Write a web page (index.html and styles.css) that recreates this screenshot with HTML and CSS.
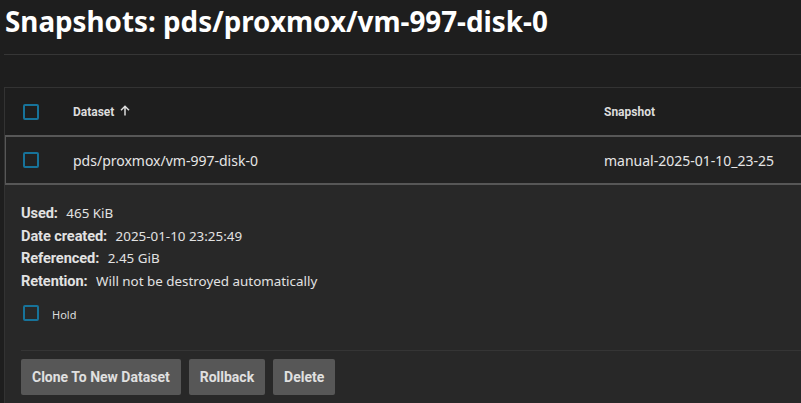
FILE: index.html
```html
<!DOCTYPE html>
<html>
<head>
<meta charset="utf-8">
<link rel="stylesheet" href="styles.css">
</head>
<body>
<div class="page">
  <h1 class="title">Snapshots: pds/proxmox/vm-997-disk-0</h1>
  <div class="card">
    <div class="thead">
      <div class="cell-check"><span class="checkbox"></span></div>
      <div class="cell-dataset th">Dataset <svg class="arrow" width="10" height="11" viewBox="0 0 10 11"><path d="M5 10.5V1.5M1 5.3L5 1.3L9 5.3" fill="none" stroke="#dcdcdc" stroke-width="1.5"/></svg></div>
      <div class="cell-snap th">Snapshot</div>
    </div>
    <div class="trow">
      <div class="cell-check"><span class="checkbox"></span></div>
      <div class="cell-dataset">pds/proxmox/vm-997-disk-0</div>
      <div class="cell-snap">manual-2025-01-10_23-25</div>
    </div>
    <div class="detail">
      <div class="info"><b>Used:</b> 465 KiB</div>
      <div class="info"><b>Date created:</b> 2025-01-10 23:25:49</div>
      <div class="info"><b>Referenced:</b> 2.45 GiB</div>
      <div class="info"><b>Retention:</b> Will not be destroyed automatically</div>
      <label class="hold"><span class="checkbox"></span><span class="hold-label">Hold</span></label>
      <div class="actions">
        <button class="btn">Clone To New Dataset</button>
        <button class="btn">Rollback</button>
        <button class="btn">Delete</button>
      </div>
    </div>
  </div>
</div>
</body>
</html>
```
FILE: styles.css
```css
html, body {
  margin: 0;
  background: #1e1e1e;
  height: 100%;
  overflow: hidden;
}
body {
  font-family: "Noto Sans", "Open Sans", sans-serif;
  color: #e2e2e2;
}
.page {
  padding-left: 4px;
}
.title {
  margin: 0;
  padding: 0 0 0 1px;
  height: 54px;
  line-height: 42px;
  font-size: 27.8px;
  font-weight: 700;
  color: #ffffff;
  border-bottom: 1px solid #363636;
}
.card {
  margin-top: 32px;
  border: 1px solid #333;
  border-right: none;
  background: #1e1e1e;
}
.thead, .trow {
  display: flex;
  align-items: center;
}
.thead {
  height: 47px;
}
.trow {
  height: 46px;
  background: #222;
  border: 1px solid #575757;
  border-top-width: 2px;
  border-bottom-width: 2px;
  border-right: none;
  font-size: 14px;
  color: #e6e6e6;
}
.cell-check {
  width: 68px;
  padding-left: 18px;
  box-sizing: border-box;
  display: flex;
}
.trow .cell-check { width: 67px; padding-left: 17px; }
.cell-dataset {
  width: 531px;
}
.th {
  font-family: Roboto, "Noto Sans", sans-serif;
  font-size: 12px;
  font-weight: 700;
  color: #dcdcdc;
  display: flex;
  align-items: center;
}
.arrow {
  margin-left: 6px;
  margin-top: -2px;
}
.checkbox {
  display: inline-block;
  width: 12px;
  height: 12px;
  border: 2px solid #17739a;
  border-radius: 2px;
}
.detail {
  background: #282828;
  padding: 17px 0 20px 16px;
  font-size: 13.4px;
  color: #e2e2e2;
}
.info {
  line-height: 22.6px;
}
.info b {
  font-family: Roboto, "Noto Sans", sans-serif;
  font-size: 14.6px;
  font-weight: 700;
  margin-right: 5px;
  letter-spacing: -0.1px;
}
.hold {
  display: flex;
  align-items: center;
  margin-top: 11px;
  padding-left: 2px;
  height: 20px;
}
.hold-label {
  font-size: 11px;
  margin-left: 13px;
  margin-top: 2px;
  color: #dcdcdc;
}
.actions {
  margin-top: 27px;
  border-top: 1px solid #353535;
  padding-top: 8px;
  display: flex;
  gap: 8px;
}
.btn {
  font-family: Roboto, "Noto Sans", sans-serif;
  font-size: 14px;
  font-weight: 700;
  color: #e0e0e0;
  background: #575757;
  border: none;
  border-radius: 2px;
  height: 36px;
  padding: 0 11px;
}
```
